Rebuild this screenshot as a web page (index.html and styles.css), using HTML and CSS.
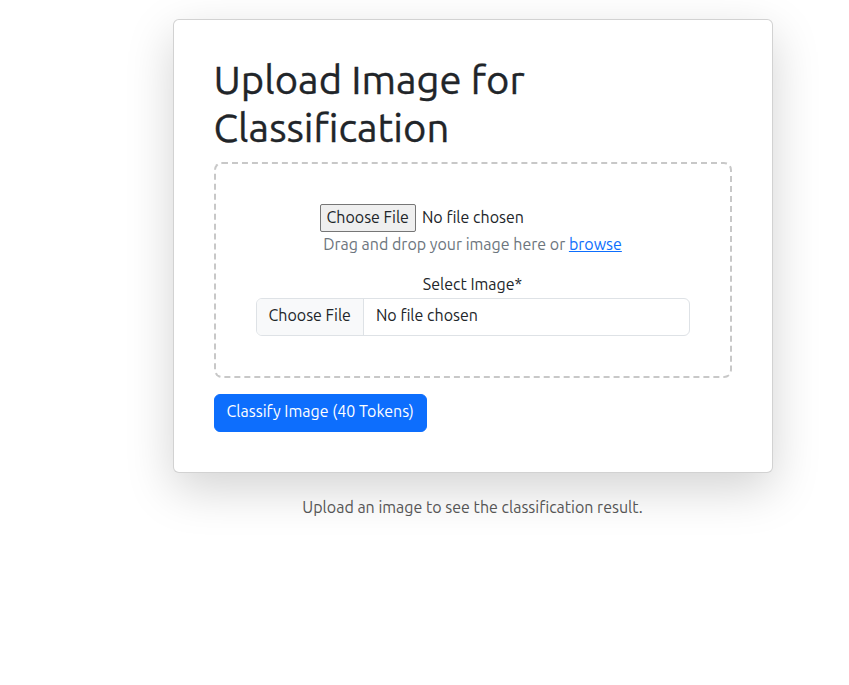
FILE: index.html
```html
<!DOCTYPE html>
<html lang="en">
<head>
<meta charset="utf-8">
<title>Upload Image for Classification</title>
<link rel="stylesheet" href="styles.css">
</head>
<body>
<div class="container">
  <div class="column">
    <div class="card">
      <h1 class="title">Upload Image for Classification</h1>
      <div class="dropzone">
        <input class="native-file" type="file" accept="image/*">
        <p class="hint">Drag and drop your image here or <a href="#" class="browse">browse</a></p>
        <label class="form-label" for="image">Select Image*</label>
        <div class="form-control">
          <span class="fc-button">Choose File</span>
          <span class="fc-text">No file chosen</span>
        </div>
      </div>
      <button class="btn-primary" type="button">Classify Image (40 Tokens)</button>
    </div>
    <p class="result">Upload an image to see the classification result.</p>
  </div>
</div>
</body>
</html>
```
FILE: styles.css
```css
* { box-sizing: border-box; }
html, body {
  margin: 0;
  padding: 0;
  background: #fff;
}
body {
  min-height: 100vh;
  font-family: "Ubuntu", "Open Sans", "Noto Sans", sans-serif;
  font-size: 16px;
  line-height: 1.5;
  color: #212529;
}
.container {
  width: 720px;
  margin: 0 auto;
  padding: 0 12px;
}
.column {
  width: 600px;
  margin-left: auto;
  padding-top: 19px;
}
.card {
  background: #fff;
  border: 1px solid rgba(0, 0, 0, 0.175);
  border-radius: 6px;
  padding: 36px 40px 40px;
  box-shadow: 0 16px 48px rgba(0, 0, 0, 0.175);
}
.title {
  margin: 0 0 10px;
  font-size: 40px;
  font-weight: 400;
  line-height: 1.2;
  color: #212529;
  -webkit-text-stroke: 0.35px #212529;
}
.dropzone {
  border: 2px dashed #c8c8c8;
  border-radius: 8px;
  padding: 40px;
  text-align: center;
}
.native-file {
  font-family: inherit;
  font-size: 16px;
  color: #212529;
  height: 28px;
  width: 306px;
  vertical-align: top;
}
.native-file::file-selector-button {
  font-family: inherit;
  font-size: 16px;
  color: #212529;
  background: #efefef;
  border: 1px solid #767676;
  border-radius: 2px;
  padding: 0 6px 2px;
  height: 28px;
  margin-right: 6px;
}
.hint {
  margin: 0 0 15px;
  line-height: 24px;
  padding-bottom: 1px;
  color: #6c757d;
}
.browse {
  color: #0d6efd;
  text-decoration: underline;
}
.form-label {
  display: block;
  margin-bottom: 0;
  padding-bottom: 2px;
  color: #212529;
}
.form-control {
  display: flex;
  align-items: stretch;
  height: 38px;
  border: 1px solid #dee2e6;
  border-radius: 6px;
  overflow: hidden;
  text-align: left;
  background: #fff;
}
.fc-button {
  display: flex;
  align-items: center;
  padding: 0 12px 4px;
  background: #f8f9fa;
  border-right: 1px solid #dee2e6;
  color: #212529;
}
.fc-text {
  display: flex;
  align-items: center;
  padding: 0 12px 4px;
}
.btn-primary {
  margin-top: 16px;
  display: inline-block;
  height: 38px;
  padding: 0 12px 4px;
  font-family: inherit;
  font-size: 16px;
  line-height: 24px;
  color: #fff;
  background: #0d6efd;
  border: 1px solid #0d6efd;
  border-radius: 6px;
  cursor: pointer;
}
.result {
  margin: 22px 0 0;
  text-align: center;
  color: #555;
}
```
